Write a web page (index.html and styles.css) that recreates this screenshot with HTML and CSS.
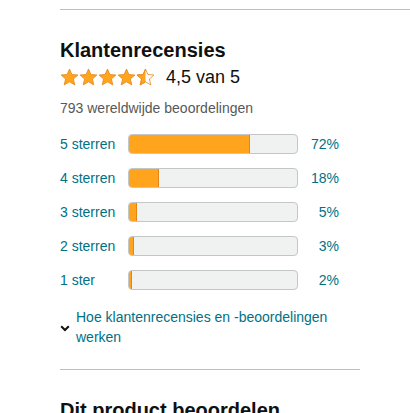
FILE: index.html
```html
<!DOCTYPE html>
<html lang="nl">
<head>
    <meta charset="UTF-8">
    <meta name="viewport" content="width=device-width, initial-scale=1.0">
    <title>Klantenrecensies</title>
    <link rel="stylesheet" href="styles.css">
</head>
<body>

<hr class="rule-wide">

<div class="reviews">
    <h2>Klantenrecensies</h2>

    <div class="rating">
        <svg class="stars" width="96" height="20" viewBox="0 0 96 20">
            <defs>
                <path id="star" d="M9.5 1l2.4 5.5 6 .5-4.5 4 1.4 5.9-5.3-3.1-5.3 3.1 1.4-5.9-4.5-4 6-.5z"/>
                <clipPath id="half"><rect x="0" y="0" width="9.5" height="20"/></clipPath>
            </defs>
            <use href="#star" x="0" y="1" class="full"/>
            <use href="#star" x="19" y="1" class="full"/>
            <use href="#star" x="38" y="1" class="full"/>
            <use href="#star" x="57" y="1" class="full"/>
            <use href="#star" x="76" y="1" class="empty"/>
            <g transform="translate(76 1)">
                <use href="#star" class="full" clip-path="url(#half)"/>
            </g>
        </svg>
        <span class="rating-text">4,5 van 5</span>
    </div>

    <p class="total">793 wereldwijde beoordelingen</p>

    <div class="histogram">
        <a class="row" href="#">
            <span class="label">5 sterren</span>
            <span class="meter"><span class="fill" style="width: 72%"></span></span>
            <span class="pct">72%</span>
        </a>
        <a class="row" href="#">
            <span class="label">4 sterren</span>
            <span class="meter"><span class="fill" style="width: 18%"></span></span>
            <span class="pct">18%</span>
        </a>
        <a class="row" href="#">
            <span class="label">3 sterren</span>
            <span class="meter"><span class="fill" style="width: 5%"></span></span>
            <span class="pct">5%</span>
        </a>
        <a class="row" href="#">
            <span class="label">2 sterren</span>
            <span class="meter"><span class="fill" style="width: 3%"></span></span>
            <span class="pct">3%</span>
        </a>
        <a class="row" href="#">
            <span class="label">1 ster</span>
            <span class="meter"><span class="fill" style="width: 2%"></span></span>
            <span class="pct">2%</span>
        </a>
    </div>

    <a class="how" href="#">
        <svg class="chevron" width="10" height="7" viewBox="0 0 10 7">
            <path d="M1.2 1.3L5 5l3.8-3.7" fill="none" stroke="#0F1111" stroke-width="2"/>
        </svg>
        <span>Hoe klantenrecensies en -beoordelingen werken</span>
    </a>

    <hr class="rule">

    <h2>Dit product beoordelen</h2>
</div>

</body>
</html>
```

FILE: styles.css
```css
body {
    margin: 0;
    font-family: "Liberation Sans", Arial, sans-serif;
    color: #0F1111;
    background: #fff;
}
hr {
    border: none;
    border-top: 1px solid #BBBFBF;
    margin: 0;
}
.rule-wide {
    margin: 9px 0 0 60px;
}
.reviews {
    width: 300px;
    padding-left: 60px;
}
h2 {
    font-size: 20px;
    line-height: 28px;
    font-weight: bold;
    margin: 26px 0 0;
}
.rating {
    display: flex;
    align-items: center;
    gap: 10px;
    height: 24px;
    margin-top: 1px;
}
.stars {
    margin-top: -1px;
}
.stars .full {
    fill: #FFA41C;
    stroke: #E3861A;
    stroke-width: 0.8;
}
.stars .empty {
    fill: #fff;
    stroke: #E3861A;
    stroke-width: 0.8;
}
.rating-text {
    font-size: 18px;
}
.total {
    font-size: 14px;
    line-height: 20px;
    color: #565959;
    margin: 9px 0 0;
}
.histogram {
    margin-top: 9px;
}
.row {
    display: grid;
    grid-template-columns: 68px 170px 41px;
    align-items: center;
    height: 34px;
    color: #007185;
    text-decoration: none;
    font-size: 14px;
}
.meter {
    display: block;
    height: 20px;
    box-sizing: border-box;
    background: #F0F2F2;
    border: 1px solid #C4C7C7;
    border-radius: 4px;
    overflow: hidden;
}
.fill {
    display: block;
    height: 100%;
    background: #FFA41C;
    border-right: 1px solid #E3861A;
    box-sizing: border-box;
}
.pct {
    text-align: right;
}
.how {
    display: flex;
    align-items: center;
    gap: 6px;
    margin-top: 10px;
    color: #007185;
    text-decoration: none;
    font-size: 14px;
    line-height: 20px;
}
.chevron {
    flex: none;
    margin-top: 3px;
}
.how span {
    width: 270px;
}
.rule {
    margin-top: 22px;
}
.rule + h2 {
    margin-top: 26px;
}
```
